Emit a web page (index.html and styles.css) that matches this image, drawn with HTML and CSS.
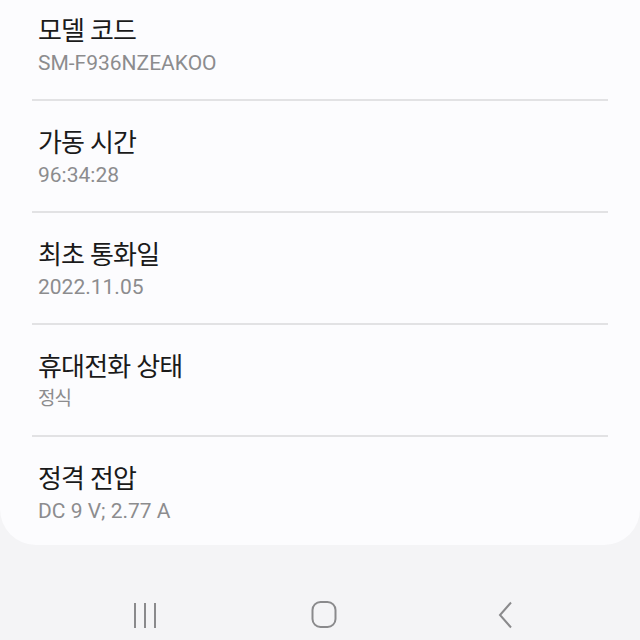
FILE: index.html
```html
<!DOCTYPE html>
<html lang="ko">
  <head>
    <meta charset="UTF-8" />
    <meta name="viewport" content="width=device-width, initial-scale=1.0" />
    <title>휴대전화 정보</title>
    <link rel="stylesheet" href="styles.css">
  </head>
  <body>
    <div class="card">
      <div class="row">
        <div class="title">모델 코드</div>
        <div class="value">SM-F936NZEAKOO</div>
      </div>
      <div class="row">
        <div class="title">가동 시간</div>
        <div class="value">96:34:28</div>
      </div>
      <div class="row">
        <div class="title">최초 통화일</div>
        <div class="value">2022.11.05</div>
      </div>
      <div class="row">
        <div class="title">휴대전화 상태</div>
        <div class="value value-ko">정식</div>
      </div>
      <div class="row">
        <div class="title">정격 전압</div>
        <div class="value">DC 9 V; 2.77 A</div>
      </div>
    </div>

    <nav class="navbar">
      <span class="nav-btn">
        <svg width="30" height="30" viewBox="0 0 30 30">
          <path d="M5 3v25M15 3v25M25 3v25" stroke="#8a8a8c" stroke-width="2" fill="none" />
        </svg>
      </span>
      <span class="nav-btn">
        <svg width="30" height="30" viewBox="0 0 30 30">
          <rect x="3.5" y="2" width="23" height="25" rx="8" stroke="#8a8a8c" stroke-width="2" fill="none" />
        </svg>
      </span>
      <span class="nav-btn">
        <svg width="30" height="30" viewBox="0 0 30 30">
          <path d="M23 2.5L12 15l11 12.5" stroke="#8a8a8c" stroke-width="2" fill="none" />
        </svg>
      </span>
    </nav>
  </body>
</html>
```

FILE: styles.css
```css
body {
  margin: 0;
  height: 640px;
  overflow: hidden;
  background-color: #f4f4f6;
  font-family: Roboto, "Noto Sans CJK KR", sans-serif;
}

.card {
  background-color: #fcfcfe;
  border-radius: 0 0 36px 36px;
  height: 545px;
  overflow: hidden;
}

.row {
  margin: 0 32px;
  padding: 25px 6px 21px;
  border-bottom: 2px solid #e2e2e4;
}

.row:first-child {
  padding-top: 14px;
}

.row:last-child {
  border-bottom: none;
}

.title {
  font-size: 26px;
  line-height: 34px;
  letter-spacing: -0.8px;
  color: #1a1a1a;
}

.value {
  font-size: 21px;
  line-height: 30px;
  color: #8c8c8e;
}

.value-ko {
  font-size: 19px;
  letter-spacing: -1px;
}

.navbar {
  display: flex;
  justify-content: center;
  gap: 149px;
  padding: 55px 0 0 7px;
}

.nav-btn {
  width: 30px;
  height: 30px;
}
```
